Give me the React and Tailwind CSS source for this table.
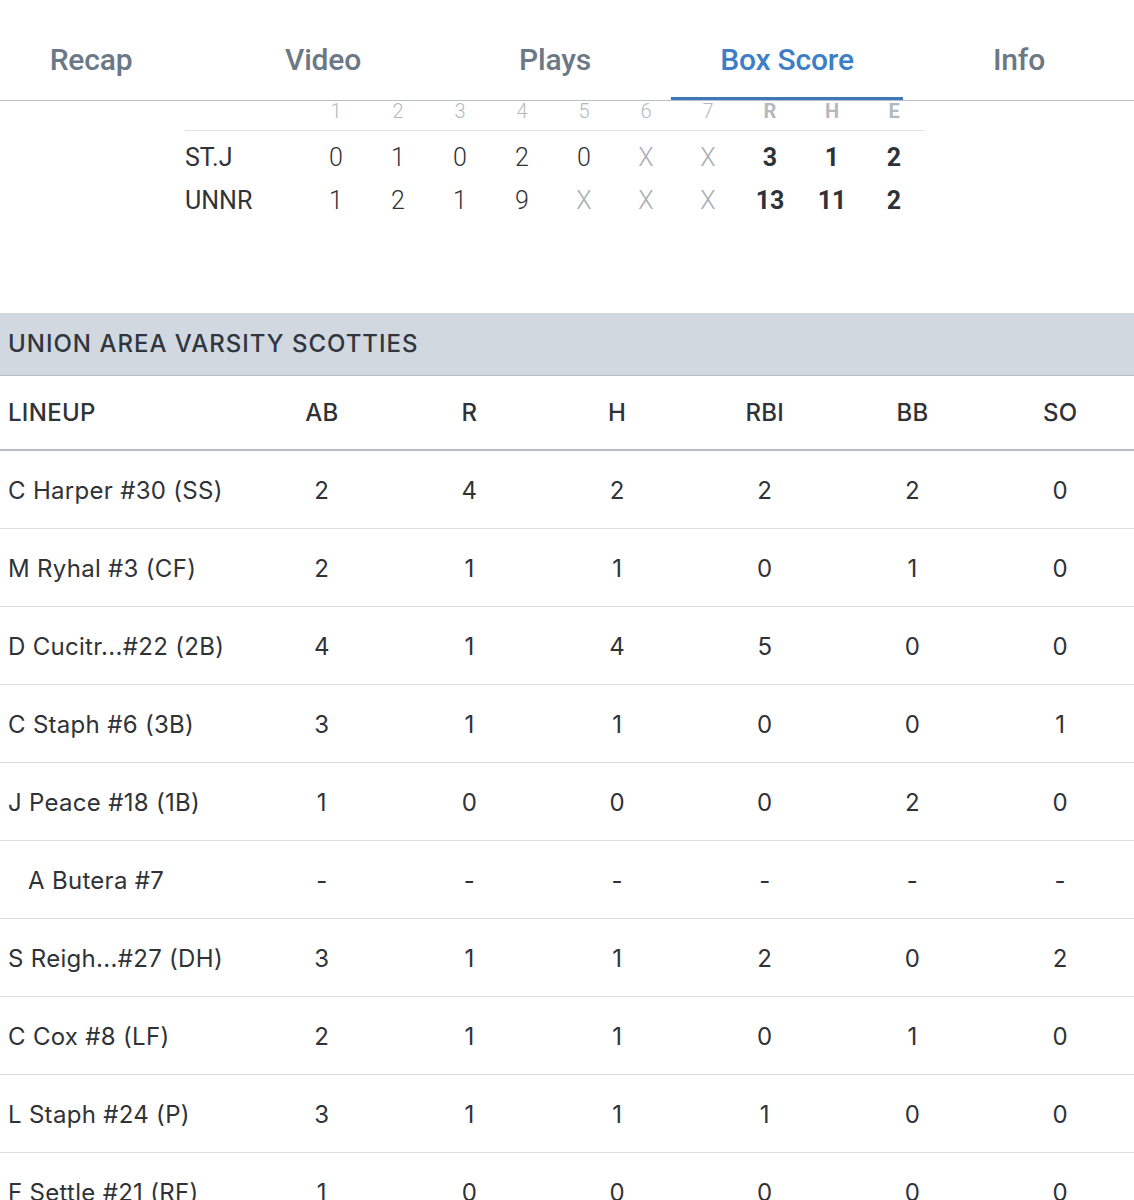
import React from 'react'

const tabs = ['Recap', 'Video', 'Plays', 'Box Score', 'Info']
const active = 'Box Score'

const innings = ['1', '2', '3', '4', '5', '6', '7']

const lineScore = [
    { team: 'ST.J', runs: ['0', '1', '0', '2', '0', 'X', 'X'], r: 3, h: 1, e: 2 },
    { team: 'UNNR', runs: ['1', '2', '1', '9', 'X', 'X', 'X'], r: 13, h: 11, e: 2 },
]

const lineup = [
    { name: 'C Harper #30 (SS)', stats: ['2', '4', '2', '2', '2', '0'] },
    { name: 'M Ryhal #3 (CF)', stats: ['2', '1', '1', '0', '1', '0'] },
    { name: 'D Cucitr...#22 (2B)', stats: ['4', '1', '4', '5', '0', '0'] },
    { name: 'C Staph #6 (3B)', stats: ['3', '1', '1', '0', '0', '1'] },
    { name: 'J Peace #18 (1B)', stats: ['1', '0', '0', '0', '2', '0'] },
    { name: 'A Butera #7', sub: true, stats: ['-', '-', '-', '-', '-', '-'] },
    { name: 'S Reigh...#27 (DH)', stats: ['3', '1', '1', '2', '0', '2'] },
    { name: 'C Cox #8 (LF)', stats: ['2', '1', '1', '0', '1', '0'] },
    { name: 'L Staph #24 (P)', stats: ['3', '1', '1', '1', '0', '0'] },
    { name: 'F Settle #21 (RF)', stats: ['1', '0', '0', '0', '0', '0'] },
]

const cols = ['AB', 'R', 'H', 'RBI', 'BB', 'SO']

export default function App() {
    return (
        <div className="w-[1134px] h-[1200px] overflow-hidden bg-white text-[#2f3337]" style={{ fontFamily: 'Inter, "Open Sans", sans-serif' }}>
            {/* Tabs */}
            <div className="relative h-[101px] border-b border-[#b9c0c7] overflow-hidden">
                <div className="flex ml-[-25px] h-full" style={{ fontFamily: 'Roboto, sans-serif' }}>
                    {tabs.map((t) => (
                        <div key={t} className="relative w-[232px] shrink-0 flex justify-center pt-[37px]">
                            <span className={`text-[30px] font-medium tracking-[-0.2px] ${t === active ? 'text-[#3d7fc6]' : 'text-[#6b7886]'}`}>{t}</span>
                            {t === active && <div className="absolute left-0 right-0 bottom-[-1px] h-[4px] bg-[#3d78bd]" />}
                        </div>
                    ))}
                </div>
            </div>

            {/* Line score */}
            <div className="ml-[185px] w-[740px] mt-[-9px]" style={{ fontFamily: 'Roboto, sans-serif' }}>
                <div className="flex h-[39px] items-center border-b border-[#dde1e5]">
                    <div className="w-[120px]" />
                    {innings.map((n) => (
                        <div key={n} className="w-[62px] text-center text-[20px] font-light text-[#b3b9bf]">{n}</div>
                    ))}
                    {['R', 'H', 'E'].map((n) => (
                        <div key={n} className="w-[62px] text-center text-[20px] font-bold text-[#b3b9bf]">{n}</div>
                    ))}
                </div>
                <div className="pt-[5px]">
                    {lineScore.map((row) => (
                        <div key={row.team} className="flex h-[43px] items-center text-[25px] font-light text-[#2f3337]">
                            <div className="w-[120px] font-normal">{row.team}</div>
                            {row.runs.map((v, i) => (
                                <div key={i} className={`w-[62px] text-center ${v === 'X' ? 'text-[#a8aeb5]' : ''}`}>{v}</div>
                            ))}
                            <div className="w-[62px] text-center font-bold">{row.r}</div>
                            <div className="w-[62px] text-center font-bold">{row.h}</div>
                            <div className="w-[62px] text-center font-bold">{row.e}</div>
                        </div>
                    ))}
                </div>
            </div>

            {/* Team header */}
            <div className="mt-[91px] h-[63px] bg-[#d1d8df] border-b border-[#b5bcc3] flex items-center px-[8px]">
                <span className="text-[24px] font-medium tracking-[1px] text-[#2f3640]">UNION AREA VARSITY SCOTTIES</span>
            </div>

            {/* Lineup table */}
            <div className="grid grid-cols-[248px_repeat(6,1fr)] h-[75px] items-center border-b-2 border-[#b5bcc3] text-[24px] font-medium tracking-[0.3px] text-[#2f3337]">
                <div className="pl-[8px]">LINEUP</div>
                {cols.map((c) => (
                    <div key={c} className="text-center">{c}</div>
                ))}
            </div>
            {lineup.map((p) => (
                <div key={p.name} className="grid grid-cols-[248px_repeat(6,1fr)] h-[78px] pt-[3px] items-center border-b border-[#dcdfe2] text-[24px] tracking-[0.3px] text-[#2f3337]">
                    <div className={`${p.sub ? 'pl-[28px]' : 'pl-[8px]'} whitespace-nowrap`}>{p.name}</div>
                    {p.stats.map((s, i) => (
                        <div key={i} className="text-center">{s}</div>
                    ))}
                </div>
            ))}
        </div>
    )
}
